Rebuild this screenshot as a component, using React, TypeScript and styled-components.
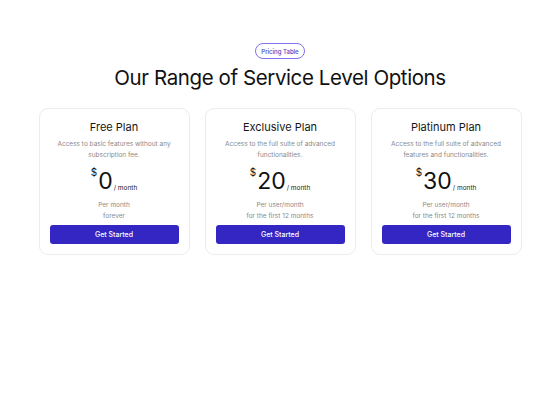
import React from 'react';
import styled, { createGlobalStyle } from 'styled-components';

const GlobalStyle = createGlobalStyle`
  html, body {
    margin: 0;
    padding: 0;
    background: #ffffff;
    font-family: Inter, "Noto Sans", sans-serif;
    color: #151515;
  }
`;

const Section = styled.section`
  display: flex;
  flex-direction: column;
  align-items: center;
  padding-top: 43px;
`;

const Pill = styled.span`
  display: inline-flex;
  align-items: center;
  height: 14px;
  padding: 0 5px;
  border: 1px solid #7e72ee;
  border-radius: 999px;
  font-size: 6px;
  font-weight: 500;
  color: #4a3fc4;
`;

const Title = styled.h1`
  margin: 5px 0 0;
  font-size: 20.5px;
  font-weight: 400;
  letter-spacing: -0.4px;
  line-height: 28px;
  color: #111111;
`;

const Grid = styled.div`
  display: grid;
  grid-template-columns: repeat(3, 151px);
  gap: 15px;
  margin-top: 16px;
`;

const Card = styled.div`
  display: flex;
  flex-direction: column;
  align-items: center;
  height: 147px;
  box-sizing: border-box;
  padding: 11px 10px 10px;
  border: 1px solid #ececec;
  border-radius: 9px;
  text-align: center;
`;

const PlanName = styled.h2`
  margin: 0;
  font-size: 11px;
  font-weight: 400;
  line-height: 14px;
  color: #161616;
`;

const Desc = styled.p`
  margin: 5px 0 0;
  font-size: 6.5px;
  line-height: 11px;
  color: #8a8a8a;
  height: 22px;
`;

const PriceRow = styled.div`
  display: flex;
  align-items: flex-end;
  margin-top: 6px;
  height: 26px;
`;

const Currency = styled.span`
  align-self: flex-start;
  font-size: 10px;
  line-height: 10px;
  margin-top: 0;
  margin-right: 1px;
`;

const Amount = styled.span`
  font-size: 23px;
  line-height: 24px;
  color: #111111;
`;

const Period = styled.span`
  font-size: 6.5px;
  line-height: 10px;
  margin-left: 1px;
  color: #222222;
`;

const Note = styled.p`
  margin: 7px 0 0;
  font-size: 6.5px;
  line-height: 11px;
  color: #8a8a8a;
`;

const Button = styled.button`
  margin-top: auto;
  width: 100%;
  height: 19px;
  border: none;
  border-radius: 3px;
  background: #3426c3;
  color: #ffffff;
  font-family: inherit;
  font-size: 7px;
  font-weight: 500;
  cursor: pointer;
`;

type Plan = {
  name: string;
  desc: string[];
  price: string;
  note: string[];
};

const plans: Plan[] = [
  {
    name: 'Free Plan',
    desc: ['Access to basic features without any', 'subscription fee.'],
    price: '0',
    note: ['Per month', 'forever'],
  },
  {
    name: 'Exclusive Plan',
    desc: ['Access to the full suite of advanced', 'functionalities.'],
    price: '20',
    note: ['Per user/month', 'for the first 12 months'],
  },
  {
    name: 'Platinum Plan',
    desc: ['Access to the full suite of advanced', 'features and functionalities.'],
    price: '30',
    note: ['Per user/month', 'for the first 12 months'],
  },
];

export default function App() {
  return (
    <>
      <GlobalStyle />
      <Section>
        <Pill>Pricing Table</Pill>
        <Title>Our Range of Service Level Options</Title>
        <Grid>
          {plans.map((p) => (
            <Card key={p.name}>
              <PlanName>{p.name}</PlanName>
              <Desc>
                {p.desc[0]}
                <br />
                {p.desc[1]}
              </Desc>
              <PriceRow>
                <Currency>$</Currency>
                <Amount>{p.price}</Amount>
                <Period>/ month</Period>
              </PriceRow>
              <Note>
                {p.note[0]}
                <br />
                {p.note[1]}
              </Note>
              <Button>Get Started</Button>
            </Card>
          ))}
        </Grid>
      </Section>
    </>
  );
}
